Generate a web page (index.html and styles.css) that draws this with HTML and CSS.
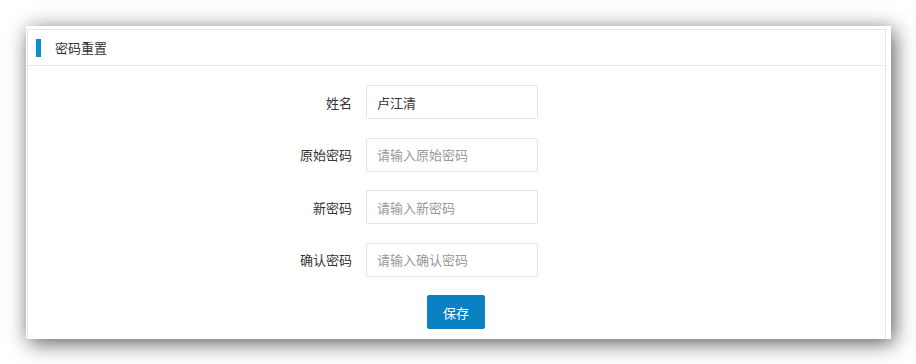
FILE: index.html
```html
<!DOCTYPE html>
<html lang="zh-CN">
<head>
    <meta charset="UTF-8">
    <title>密码重置</title>
    <link rel="stylesheet" href="styles.css">
</head>
<body>
    <div class="window">
        <div class="panel">
            <div class="panel-heading">
                <span class="bar"></span>
                <span class="title">密码重置</span>
            </div>
            <form class="panel-body">
                <div class="form-group">
                    <label for="name">姓名</label>
                    <input type="text" id="name" value="卢江清">
                </div>
                <div class="form-group">
                    <label for="oldPwd">原始密码</label>
                    <input type="password" id="oldPwd" placeholder="请输入原始密码">
                </div>
                <div class="form-group">
                    <label for="newPwd">新密码</label>
                    <input type="password" id="newPwd" placeholder="请输入新密码">
                </div>
                <div class="form-group">
                    <label for="confirmPwd">确认密码</label>
                    <input type="password" id="confirmPwd" placeholder="请输入确认密码">
                </div>
                <div class="actions">
                    <button type="button">保存</button>
                </div>
            </form>
        </div>
    </div>
</body>
</html>
```

FILE: styles.css
```css
html, body {
    margin: 0;
    padding: 0;
    background: #fff;
    font-family: "Noto Sans CJK SC", "Noto Sans", sans-serif;
    font-size: 13px;
    color: #333;
}
body {
    height: 364px;
    overflow: hidden;
}
.window {
    margin: 26px 0 0 26px;
    width: 865px;
    height: 313px;
    box-sizing: border-box;
    padding: 3px 5px 0 1px;
    background: #fff;
    overflow: hidden;
    box-shadow: 3px 4px 20px rgba(0,0,0,0.65);
}
.panel {
    border: 1px solid #e6e6e6;
    border-bottom: none;
    height: 340px;
}
.panel-heading {
    display: flex;
    align-items: center;
    height: 35px;
    padding-left: 8px;
    border-bottom: 1px solid #e6e6e6;
}
.bar {
    width: 5px;
    height: 18px;
    background: #0e8dd0;
    margin-right: 14px;
}
.title {
    font-size: 13px;
    color: #333;
}
.panel-body {
    padding-top: 19px;
    margin: 0;
}
.form-group {
    display: flex;
    align-items: center;
    margin-bottom: 18.5px;
}
label {
    width: 100px;
    margin-left: 224px;
    margin-right: 14px;
    text-align: right;
    color: #333;
}
input {
    width: 172px;
    height: 34px;
    box-sizing: border-box;
    padding: 0 10px;
    border: 1px solid #e3e3e3;
    border-radius: 2px;
    font-family: inherit;
    font-size: 13px;
    color: #333;
    outline: none;
}
input::placeholder {
    color: #999;
}
.actions {
    display: flex;
    padding-left: 399px;
}
button {
    width: 58px;
    height: 34px;
    border: none;
    border-radius: 2px;
    background: #0b80c3;
    color: #fff;
    font-family: inherit;
    font-size: 13px;
    cursor: pointer;
}
```
